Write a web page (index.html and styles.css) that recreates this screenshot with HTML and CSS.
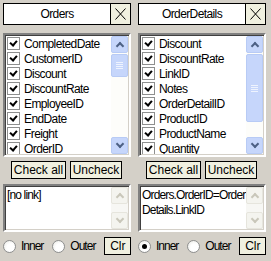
FILE: index.html
```html
<!DOCTYPE html>
<html lang="en">
<head>
  <meta charset="UTF-8" />
  <title>Link Tables</title>
  <link rel="stylesheet" href="styles.css">
</head>
<body>
  <div class="panel">
    <div class="head">
      <div class="title">Orders</div>
      <div class="close"><svg width="19" height="20" viewBox="0 0 19 20"><path d="M4.5 4.5 L14.5 15.5 M14.5 4.5 L4.5 15.5" stroke="#000" stroke-width="1" fill="none"/></svg></div>
    </div>
    <div class="list">
      <div class="items">
        <label class="item"><span class="check"></span>CompletedDate</label>
        <label class="item"><span class="check"></span>CustomerID</label>
        <label class="item"><span class="check"></span>Discount</label>
        <label class="item"><span class="check"></span>DiscountRate</label>
        <label class="item"><span class="check"></span>EmployeeID</label>
        <label class="item"><span class="check"></span>EndDate</label>
        <label class="item"><span class="check"></span>Freight</label>
        <label class="item"><span class="check"></span>OrderID</label>
      </div>
      <div class="vscroll">
        <div class="sbtn up"></div>
        <div class="track"><div class="thumb" style="height: 23px"></div></div>
        <div class="sbtn down"></div>
      </div>
    </div>
    <div class="buttons">
      <button class="btn wide">Check all</button>
      <button class="btn">Uncheck</button>
    </div>
    <div class="memo">
      <div class="memo-text">[no link]</div>
      <div class="vscroll off">
        <div class="sbtn up"></div>
        <div class="track"></div>
        <div class="sbtn down"></div>
      </div>
    </div>
    <div class="bottom">
      <label class="radio"><span class="dot"></span>Inner</label>
      <label class="radio"><span class="dot"></span>Outer</label>
      <button class="btn clr">Clr</button>
    </div>
  </div>

  <div class="panel">
    <div class="head">
      <div class="title">OrderDetails</div>
      <div class="close"><svg width="19" height="20" viewBox="0 0 19 20"><path d="M4.5 4.5 L14.5 15.5 M14.5 4.5 L4.5 15.5" stroke="#000" stroke-width="1" fill="none"/></svg></div>
    </div>
    <div class="list">
      <div class="items">
        <label class="item"><span class="check"></span>Discount</label>
        <label class="item"><span class="check"></span>DiscountRate</label>
        <label class="item"><span class="check"></span>LinkID</label>
        <label class="item"><span class="check"></span>Notes</label>
        <label class="item"><span class="check"></span>OrderDetailID</label>
        <label class="item"><span class="check"></span>ProductID</label>
        <label class="item"><span class="check"></span>ProductName</label>
        <label class="item"><span class="check"></span>Quantity</label>
      </div>
      <div class="vscroll">
        <div class="sbtn up"></div>
        <div class="track"><div class="thumb" style="height: 68px"></div></div>
        <div class="sbtn down"></div>
      </div>
    </div>
    <div class="buttons">
      <button class="btn wide">Check all</button>
      <button class="btn">Uncheck</button>
    </div>
    <div class="memo">
      <div class="memo-text">Orders.OrderID=OrderDetails.LinkID</div>
      <div class="vscroll off">
        <div class="sbtn up"></div>
        <div class="track"></div>
        <div class="sbtn down"></div>
      </div>
    </div>
    <div class="bottom">
      <label class="radio"><span class="dot on"></span>Inner</label>
      <label class="radio"><span class="dot"></span>Outer</label>
      <button class="btn clr">Clr</button>
    </div>
  </div>
</body>
</html>
```

FILE: styles.css
```css
body {
  margin: 0;
  width: 271px;
  height: 261px;
  background: #d4d0c8;
  font-family: "Liberation Sans", Arial, sans-serif;
  font-size: 12px;
  letter-spacing: -0.6px;
  color: #000;
  display: flex;
  gap: 7px;
  padding: 3px 0 0 3px;
  box-sizing: border-box;
}

.panel {
  width: 128px;
  display: flex;
  flex-direction: column;
}

/* header */
.head {
  display: flex;
  height: 22px;
}
.title {
  flex: 1;
  background: #fff;
  border: 1px solid #000;
  text-align: center;
  line-height: 20px;
}
.close {
  width: 19px;
  background: #f0f0e0;
  border: 1px solid #000;
  border-left: none;
}
.close svg {
  display: block;
}

/* field list */
.list {
  margin-top: 8px;
  height: 124px;
  display: flex;
  background: #fff;
  border: 2px solid;
  border-color: #808080 #fff #fff #808080;
  box-shadow: inset 1px 1px 0 #404040, inset -1px -1px 0 #d4d0c8;
  box-sizing: border-box;
  padding: 1px;
}
.items {
  flex: 1;
  overflow: hidden;
}
.item {
  display: flex;
  align-items: center;
  height: 15px;
  padding-left: 1px;
  white-space: nowrap;
}
.check {
  width: 11px;
  height: 11px;
  border: 1px solid #8e8f8f;
  background: #fff;
  margin-right: 4px;
  position: relative;
  flex: none;
}
.check::after {
  content: "";
  position: absolute;
  left: 3px;
  top: 1px;
  width: 3px;
  height: 5px;
  border: solid #000;
  border-width: 0 2px 2px 0;
  transform: rotate(40deg);
}

/* scrollbars */
.vscroll {
  width: 17px;
  display: flex;
  flex-direction: column;
  background: #fdfdfa;
  flex: none;
}
.sbtn {
  height: 17px;
  box-sizing: border-box;
  border: 1px solid #b8cbf5;
  border-radius: 2px;
  background: #c6d6fb;
  position: relative;
}
.sbtn::after {
  content: "";
  position: absolute;
  left: 5px;
  width: 4px;
  height: 4px;
  border: solid #4d6185;
  border-width: 2px 2px 0 0;
}
.up::after {
  top: 6px;
  transform: rotate(-45deg);
}
.down::after {
  top: 3px;
  transform: rotate(135deg);
}
.track {
  flex: 1;
  padding: 1px 0;
}
.thumb {
  box-sizing: border-box;
  border: 1px solid #b8cbf5;
  border-radius: 2px;
  background: #c6d6fb repeating-linear-gradient(#eef3fe 0 1px, transparent 1px 2px) no-repeat center / 7px 7px;
}
.off {
  background: #f7f7f4;
}
.off .sbtn {
  background: #f4f4ef;
  border-color: #e6e5dd;
}
.off .sbtn::after {
  border-color: #c9c7ba;
}

/* buttons */
.buttons {
  display: flex;
  gap: 4px;
  padding-left: 8px;
  margin-top: 4px;
}
.btn {
  font: inherit;
  height: 18px;
  padding: 0;
  border: 1px solid #000;
  background: #f0f0e0;
  width: 52px;
  white-space: nowrap;
  color: #000;
}
.btn.wide {
  width: 55px;
}

/* link text */
.memo {
  margin-top: 5px;
  height: 48px;
  display: flex;
  background: #fff;
  border: 2px solid;
  border-color: #808080 #fff #fff #808080;
  box-shadow: inset 1px 1px 0 #404040, inset -1px -1px 0 #d4d0c8;
  box-sizing: border-box;
  padding: 1px;
}
.memo-text {
  flex: 1;
  min-width: 0;
  padding: 1px 0 0 1px;
  line-height: 15px;
  letter-spacing: -0.85px;
  word-break: break-all;
}

/* join type */
.bottom {
  display: flex;
  align-items: center;
  margin-top: 5px;
  height: 18px;
}
.radio {
  display: flex;
  align-items: center;
  margin-right: 9px;
  white-space: nowrap;
  letter-spacing: -1px;
}
.dot {
  width: 11px;
  height: 11px;
  border-radius: 50%;
  border: 1px solid #8e8f8f;
  background: radial-gradient(circle at 60% 60%, #fff 40%, #e6e6e0);
  margin-right: 5px;
  position: relative;
  flex: none;
}
.dot.on::after {
  content: "";
  position: absolute;
  left: 3px;
  top: 3px;
  width: 5px;
  height: 5px;
  border-radius: 50%;
  background: #000;
}
.clr {
  margin-left: auto;
  width: 27px;
  margin-right: 1px;
  flex: none;
}
```
